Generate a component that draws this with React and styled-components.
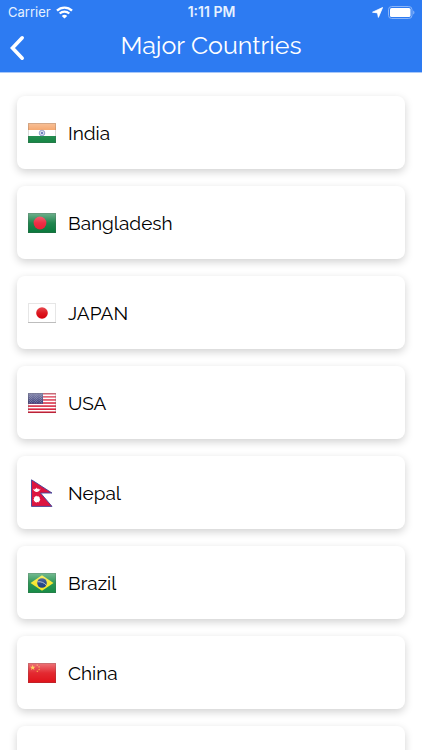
import React from 'react';
import styled, { createGlobalStyle } from 'styled-components';

const GlobalStyle = createGlobalStyle`
  * {
    box-sizing: border-box;
  }
  body {
    margin: 0;
    background: #fff;
    font-family: Raleway, Lato, 'Liberation Sans', sans-serif;
  }
`;

const Screen = styled.div`
  display: flex;
  flex-direction: column;
  height: 100vh;
`;

const Header = styled.header`
  flex: none;
  background: #2d7bf2;
  border-bottom: 1px solid #a9c8f8;
  color: #fff;
`;

const StatusBar = styled.div`
  display: grid;
  grid-template-columns: 1fr auto 1fr;
  align-items: center;
  height: 24px;
  padding: 0 7px 0 8px;
  font-family: Inter, 'Liberation Sans', sans-serif;
  font-size: 13px;
  line-height: 16px;
  color: #e6f1ff;
`;

const StatusGroup = styled.div`
  display: flex;
  align-items: center;
  justify-content: ${props => (props.$end ? 'flex-end' : 'flex-start')};
  gap: 5px;
`;

const Time = styled.span`
  font-size: 14px;
  font-weight: 600;
`;

const NavBar = styled.div`
  display: grid;
  grid-template-columns: 36px 1fr 36px;
  align-items: center;
  height: 48px;
`;

const BackButton = styled.button`
  display: flex;
  align-items: center;
  justify-content: center;
  height: 48px;
  padding: 0 2px 0 0;
  border: 0;
  background: none;
  color: #fff;
  cursor: pointer;
`;

const Title = styled.h1`
  margin: 0;
  padding-bottom: 6px;
  font-size: 25px;
  line-height: 32px;
  font-weight: 400;
  text-align: center;
`;

const List = styled.ul`
  flex: 1;
  display: flex;
  flex-direction: column;
  gap: 17px;
  margin: 0;
  padding: 23px 17px;
  overflow-y: auto;
  scrollbar-width: none;
  list-style: none;
`;

const Card = styled.button`
  display: flex;
  align-items: center;
  gap: 12px;
  width: 100%;
  height: 73px;
  padding: 0 11px;
  border: 0;
  border-radius: 8px;
  background: #fff;
  box-shadow: 0 3px 8px rgba(0, 0, 0, 0.18);
  color: #000;
  font-family: inherit;
  font-size: 19px;
  font-weight: 400;
  line-height: 24px;
  text-align: left;
  cursor: pointer;
`;

const FlagIcon = styled.svg`
  flex: none;
  width: 28px;
  height: 28px;
`;

const Gloss = ({ id }) => (
  <>
    <linearGradient id={id} x1="0" y1="0" x2="0" y2="1">
      <stop offset="0" stopColor="#fff" stopOpacity="0.42" />
      <stop offset="0.5" stopColor="#fff" stopOpacity="0.1" />
      <stop offset="1" stopColor="#fff" stopOpacity="0" />
    </linearGradient>
    <rect y="4" width="28" height="20" fill={`url(#${id})`} />
    <rect x="0.5" y="4.5" width="27" height="19" fill="none" stroke="#555" strokeOpacity="0.22" />
  </>
);

const star = (cx, cy, r, turn = 0) =>
  Array.from({ length: 10 }, (_, i) => {
    const a = ((i * 36 + turn - 90) * Math.PI) / 180;
    const d = i % 2 ? r * 0.4 : r;
    return `${cx + d * Math.cos(a)},${cy + d * Math.sin(a)}`;
  }).join(' ');

const India = () => (
  <>
    <rect y="4" width="28" height="20" fill="#fff" />
    <rect y="4" width="28" height="7" fill="#f3944f" />
    <rect y="17" width="28" height="7" fill="#158544" />
    <circle cx="14" cy="14" r="2.8" fill="#e4e8f6" stroke="#6c7dbb" strokeWidth="0.8" />
    <path d="M14 11.5v5M11.5 14h5M12.2 12.2l3.6 3.6M15.8 12.2l-3.6 3.6" stroke="#8492c8" strokeWidth="0.4" />
    <circle cx="14" cy="14" r="0.9" fill="#3e53a3" />
    <Gloss id="gloss-india" />
  </>
);

const Bangladesh = () => (
  <>
    <rect y="4" width="28" height="20" fill="#08783b" />
    <circle cx="12" cy="14" r="6.4" fill="#ec1730" />
    <Gloss id="gloss-bangladesh" />
  </>
);

const Japan = () => (
  <>
    <linearGradient id="japan-sun" x1="0" y1="0" x2="0" y2="1">
      <stop offset="0" stopColor="#e84a50" />
      <stop offset="0.5" stopColor="#dc1820" />
      <stop offset="1" stopColor="#d5000b" />
    </linearGradient>
    <rect x="0.5" y="4.5" width="27" height="19" fill="#fff" stroke="#e6e6e6" />
    <path d="M0 23.5h28" stroke="#bdbdbd" />
    <circle cx="14" cy="14" r="5.8" fill="url(#japan-sun)" />
  </>
);

const Usa = () => (
  <>
    <rect y="4" width="28" height="20" fill="#fff" />
    {[0, 1, 2, 3, 4, 5, 6].map(i => (
      <rect key={i} y={4 + i * 3.08} width="28" height="1.54" fill="#d5142f" />
    ))}
    <rect y="4" width="15" height="10.8" fill="#2d306f" />
    {[0, 1, 2, 3, 4, 5, 6, 7, 8].map(row =>
      Array.from({ length: row % 2 ? 5 : 6 }, (_, i) => (
        <circle key={`${row}-${i}`} cx={1.3 + (row % 2) * 1.2 + i * 2.45} cy={5 + row * 1.1} r="0.36" fill="#c3c5dc" />
      ))
    )}
    <Gloss id="gloss-usa" />
  </>
);

const Nepal = () => (
  <>
    <path d="M3.5 0.8 24 14H12.5L24 27.4H3.5Z" fill="#dc1440" stroke="#3d459b" strokeWidth="0.9" />
    <path d="M4.8 9.5c1.2 4.6 6.6 4.6 7.8 0-1.7 2.4-6.1 2.4-7.8 0Z" fill="#fff" />
    <path d="m6.4 10.9.5-1.4 1 .5.8-1.5.8 1.5 1-.5.5 1.4c-1.2 1.5-3.4 1.5-4.6 0Z" fill="#fff" />
    <circle cx="8.8" cy="20.3" r="2.8" fill="#fff" />
    {Array.from({ length: 12 }, (_, i) => (
      <path key={i} d="m8.8 16.5.9 1.8H7.9Z" fill="#fff" transform={`rotate(${i * 30} 8.8 20.3)`} />
    ))}
  </>
);

const Brazil = () => (
  <>
    <rect y="4" width="28" height="20" fill="#168b45" />
    <path d="M2.5 14 14 6.2 25.5 14 14 21.8Z" fill="#f6e51f" />
    <circle cx="14" cy="14" r="4.8" fill="#17387f" />
    <path d="M9.5 12.8c3.5-.4 6.6.7 8.9 3.4" fill="none" stroke="#c9d5df" strokeWidth="0.8" />
    <Gloss id="gloss-brazil" />
  </>
);

const China = () => (
  <>
    <rect y="4" width="28" height="20" fill="#e0121a" />
    <g fill="#ffc928">
      <polygon points={star(4.7, 8.7, 2.9)} />
      <polygon points={star(9.3, 6.1, 1, 20)} />
      <polygon points={star(11.1, 7.9, 1, 45)} />
      <polygon points={star(11.1, 10.5, 1)} />
      <polygon points={star(9.3, 12.3, 1, 20)} />
    </g>
    <Gloss id="gloss-china" />
  </>
);

const countries = [
  { name: 'India', Flag: India },
  { name: 'Bangladesh', Flag: Bangladesh },
  { name: 'JAPAN', Flag: Japan },
  { name: 'USA', Flag: Usa },
  { name: 'Nepal', Flag: Nepal },
  { name: 'Brazil', Flag: Brazil },
  { name: 'China', Flag: China },
  { name: '' },
];

const CountryCard = ({ name, Flag }) => (
  <li>
    <Card type="button">
      {Flag && (
        <FlagIcon viewBox="0 0 28 28" aria-hidden="true">
          <Flag />
        </FlagIcon>
      )}
      {name}
    </Card>
  </li>
);

const WifiIcon = () => (
  <svg width="17" height="13" viewBox="0 0 17 13" fill="none" stroke="#fff" strokeWidth="2.3" aria-hidden="true">
    <path d="M1 4.6c4.2-4.1 10.8-4.1 15 0" />
    <path d="M3.7 7.5c2.7-2.6 6.9-2.6 9.6 0" />
    <path d="m8.5 12.6-2.7-2.7c1.5-1.5 3.9-1.5 5.4 0Z" fill="#fff" stroke="none" />
  </svg>
);

const LocationIcon = () => (
  <svg width="11" height="11" viewBox="0 0 11 11" aria-hidden="true">
    <path d="M10.6.5 6.4 10.4 5.5 5.9.5 5.2Z" fill="#fff" stroke="#fff" strokeWidth="0.8" strokeLinejoin="round" />
  </svg>
);

const BatteryIcon = () => (
  <svg width="27" height="13" viewBox="0 0 27 13" aria-hidden="true">
    <rect x="0.5" y="0.5" width="23.5" height="12" rx="3.2" fill="none" stroke="#8ab5f8" />
    <rect x="2" y="2" width="20.5" height="9" rx="1.6" fill="#fff" />
    <path d="M25.2 4.5c1.7.6 1.7 3.4 0 4Z" fill="#8ab5f8" />
  </svg>
);

const App = () => (
  <Screen>
    <GlobalStyle />
    <Header>
      <StatusBar>
        <StatusGroup>
          Carrier
          <WifiIcon />
        </StatusGroup>
        <Time>1:11 PM</Time>
        <StatusGroup $end>
          <LocationIcon />
          <BatteryIcon />
        </StatusGroup>
      </StatusBar>
      <NavBar>
        <BackButton type="button" aria-label="Back">
          <svg width="16" height="26" viewBox="0 0 16 26" fill="none" stroke="currentColor" strokeWidth="3.6" aria-hidden="true">
            <path d="M13.2 2.8 3.5 13l9.7 10.2" strokeLinecap="round" />
          </svg>
        </BackButton>
        <Title>Major Countries</Title>
      </NavBar>
    </Header>
    <List>
      {countries.map(country => (
        <CountryCard key={country.name} {...country} />
      ))}
    </List>
  </Screen>
);

export default App;
